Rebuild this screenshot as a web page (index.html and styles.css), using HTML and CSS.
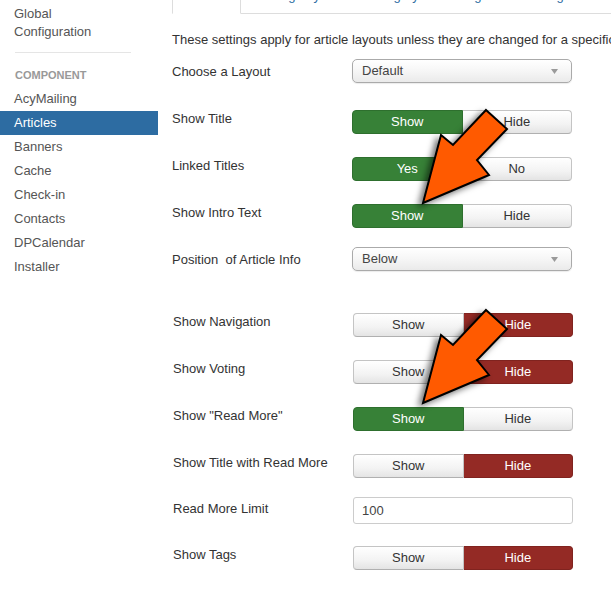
FILE: index.html
```html
<!DOCTYPE html>
<html lang="en">
<head>
<meta charset="utf-8">
<title>Articles Options</title>
<link rel="stylesheet" href="styles.css">
</head>
<body>
<div class="page">
  <aside class="sidebar">
    <ul class="nav">
      <li class="nav-item nav-first">Global<br>Configuration</li>
      <li class="nav-divider"></li>
      <li class="nav-header">Component</li>
      <li class="nav-item">AcyMailing</li>
      <li class="nav-item active">Articles</li>
      <li class="nav-item">Banners</li>
      <li class="nav-item">Cache</li>
      <li class="nav-item">Check-in</li>
      <li class="nav-item">Contacts</li>
      <li class="nav-item">DPCalendar</li>
      <li class="nav-item">Installer</li>
    </ul>
  </aside>
  <main class="main">
    <ul class="tabs">
      <li class="tab active">Articles</li>
      <li class="tab">Editing Layout</li>
      <li class="tab">Category</li>
      <li class="tab">Categories</li>
      <li class="tab">Blog / Featured Layouts</li>
    </ul>
    <p class="desc">These settings apply for article layouts unless they are changed for a specific menu item.</p>

    <div class="group">
      <div class="row">
        <div class="label">Choose a Layout</div>
        <div class="select"><span>Default</span><svg class="caret" width="7" height="5" viewBox="0 0 7 5"><polygon points="0,0 7,0 3.5,5"/></svg></div>
      </div>
      <div class="row">
        <div class="label">Show Title</div>
        <div class="toggle"><span class="btn yes">Show</span><span class="btn">Hide</span></div>
      </div>
      <div class="row">
        <div class="label">Linked Titles</div>
        <div class="toggle"><span class="btn yes">Yes</span><span class="btn">No</span></div>
      </div>
      <div class="row">
        <div class="label">Show Intro Text</div>
        <div class="toggle"><span class="btn yes">Show</span><span class="btn">Hide</span></div>
      </div>
      <div class="row">
        <div class="label">Position&nbsp; of Article Info</div>
        <div class="select"><span>Below</span><svg class="caret" width="7" height="5" viewBox="0 0 7 5"><polygon points="0,0 7,0 3.5,5"/></svg></div>
      </div>
    </div>

    <div class="group group-2">
      <div class="row">
        <div class="label">Show Navigation</div>
        <div class="toggle"><span class="btn">Show</span><span class="btn no">Hide</span></div>
      </div>
      <div class="row">
        <div class="label">Show Voting</div>
        <div class="toggle"><span class="btn">Show</span><span class="btn no">Hide</span></div>
      </div>
      <div class="row">
        <div class="label">Show "Read More"</div>
        <div class="toggle"><span class="btn yes">Show</span><span class="btn">Hide</span></div>
      </div>
      <div class="row row-short">
        <div class="label">Show Title with Read More</div>
        <div class="toggle"><span class="btn">Show</span><span class="btn no">Hide</span></div>
      </div>
      <div class="row row-short">
        <div class="label">Read More Limit</div>
        <div class="input">100</div>
      </div>
      <div class="row">
        <div class="label">Show Tags</div>
        <div class="toggle"><span class="btn">Show</span><span class="btn no">Hide</span></div>
      </div>
    </div>
  </main>

  <svg class="arrows" width="611" height="602" viewBox="0 0 611 602">
    <polygon class="arrow" points="486,110 507,129 477,160 489,175 423,203 441,135 453,145"/>
    <polygon class="arrow" points="486,310 507,329 477,360 489,375 423,403 441,335 453,345"/>
  </svg>
</div>
</body>
</html>
```

FILE: styles.css
```css
html, body {
  margin: 0;
  padding: 0;
  background: #fff;
}

body {
  font-family: "Liberation Sans", Arial, Helvetica, sans-serif;
  font-size: 13px;
  line-height: 18px;
  color: #333;
  overflow: hidden;
}

.page {
  position: relative;
  display: flex;
  width: 611px;
  height: 602px;
  overflow: hidden;
}

/* Sidebar */
.sidebar {
  width: 158px;
  flex: 0 0 158px;
}

.nav {
  list-style: none;
  margin: 0;
  padding: 0;
}

.nav-item {
  padding: 3px 14px;
  line-height: 18px;
  color: #555;
}

.nav-first {
  padding-top: 5px;
  padding-bottom: 0;
}

.nav-item.active {
  background: #2d6ca2;
  color: #fff;
}

.nav-divider {
  height: 1px;
  width: 116px;
  margin: 11px 0 9px 15px;
  background: #e5e5e5;
}

.nav-header {
  padding: 3px 15px 2px;
  font-size: 11px;
  line-height: 20px;
  font-weight: bold;
  color: #999;
  text-transform: uppercase;
}

/* Main */
.main {
  flex: 1;
  padding-left: 14px;
  min-width: 0;
  overflow: hidden;
}

.tabs {
  list-style: none;
  display: flex;
  margin: -22px 0 0;
  padding: 0;
  border-bottom: 1px solid #ddd;
  white-space: nowrap;
}

.tab {
  padding: 8px 12px;
  line-height: 18px;
  border: 1px solid transparent;
  margin: 0 2px -1px 0;
  color: #2d6ca2;
  border-radius: 4px 4px 0 0;
}

.tab.active {
  border-color: #ddd;
  border-bottom-color: #fff;
  background: #fff;
  color: #555;
}

.desc {
  margin: 17px 0 11px;
  white-space: nowrap;
}

.group-2 {
  margin-top: 15px;
  padding-left: 1px;
}

.row {
  display: flex;
  align-items: flex-start;
  height: 47px;
}

.row-short {
  height: 46px;
}

.label {
  width: 180px;
  flex: 0 0 180px;
  padding-top: 3px;
  line-height: 18px;
}

/* Select */
.select {
  position: relative;
  box-sizing: border-box;
  width: 220px;
  height: 24px;
  margin-top: -1px;
  padding: 0 9px;
  display: flex;
  align-items: center;
  justify-content: space-between;
  border: 1px solid #aaa;
  border-radius: 5px;
  background: linear-gradient(#ffffff 0%, #f6f6f6 50%, #eaeaea 100%);
  box-shadow: 0 1px 1px rgba(0, 0, 0, 0.08);
  color: #444;
  line-height: 22px;
}

.caret {
  display: block;
  margin-right: 4px;
  fill: #9a9a9a;
}

/* Toggles */
.toggle {
  display: flex;
  width: 220px;
  height: 24px;
  margin-top: 3px;
}

.btn {
  flex: 1 1 0;
  box-sizing: border-box;
  height: 24px;
  line-height: 22px;
  text-align: center;
  border: 1px solid #c4c4c4;
  border-bottom-color: #b0b0b0;
  background: linear-gradient(#ffffff 0%, #f3f3f3 60%, #e4e4e4 100%);
  color: #333;
}

.btn:first-child {
  border-radius: 4px 0 0 4px;
}

.btn:last-child {
  border-radius: 0 4px 4px 0;
  border-left: none;
}

.btn.yes {
  background: #378137;
  border-color: #2e6f2e;
  color: #fff;
}

.btn.no {
  background: #942a25;
  border-color: #80231f;
  color: #fff;
}

/* Input */
.input {
  box-sizing: border-box;
  width: 220px;
  height: 27px;
  padding: 0 8px;
  border: 1px solid #ccc;
  border-radius: 3px;
  background: #fff;
  line-height: 25px;
  color: #444;
}

/* Arrows overlay */
.arrows {
  position: absolute;
  top: 0;
  left: 0;
  pointer-events: none;
}

.arrow {
  fill: #ff5a00;
  stroke: #000;
  stroke-width: 2;
  stroke-linejoin: miter;
  filter: drop-shadow(-4px 3px 3px rgba(0, 0, 0, 0.55));
}
```
